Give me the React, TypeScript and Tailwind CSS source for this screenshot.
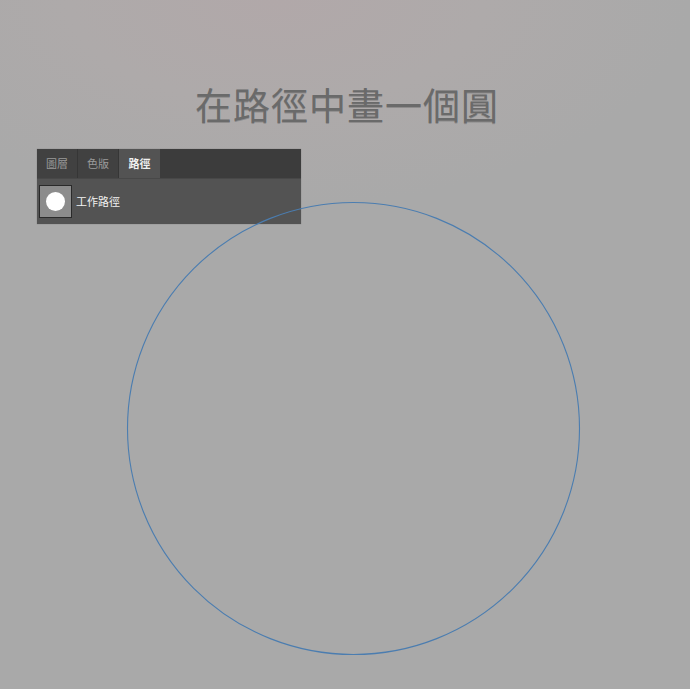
import React from "react";

export default function App() {
  return (
    <div
      className="relative w-[690px] h-[689px] overflow-hidden bg-[#a9a9a9]"
      style={{ fontFamily: '"Noto Sans CJK TC", "Noto Sans", sans-serif' }}
    >
      <div className="absolute inset-0 bg-[radial-gradient(ellipse_60%_30%_at_40%_0%,#b1a8a9_0%,#aeaaaa_50%,rgba(169,169,169,0)_100%)]" />
      <div className="relative flex flex-col">
        <div className="flex justify-center pt-[83px] pl-[4px]">
          <h1
            className="text-[37px] leading-[42px] font-normal tracking-[1px] text-[#6a6a6a]"
            style={{ textShadow: "0 1px 0 rgba(85,85,85,0.35)" }}
          >
            在路徑中畫一個圓
          </h1>
        </div>
        <div className="ml-[37px] mt-[24px] w-[264px] bg-[#3c3c3c] shadow-[0_0_1px_rgba(0,0,0,0.3)]">
          <div className="flex h-[29px] text-[11px] leading-none">
            <div className="w-[41px] flex items-center justify-center text-[#9a9a9a] bg-[#414141] border-r border-[#363636]">
              圖層
            </div>
            <div className="w-[41px] flex items-center justify-center text-[#9a9a9a] bg-[#414141] border-r border-[#363636]">
              色版
            </div>
            <div className="w-[41px] flex items-center justify-center text-[#f0f0f0] font-bold bg-[#535353]">
              路徑
            </div>
          </div>
          <div className="flex items-center h-[46px] bg-[#535353] border-t border-[#484848]">
            <div className="ml-[2px] w-[33px] h-[33px] bg-[#8c8c8c] border border-[#2a2a2a] flex items-center justify-center">
              <div className="w-[19px] h-[19px] rounded-full bg-white" />
            </div>
            <span className="ml-[4px] text-[11px] text-[#f2f2f2]">工作路徑</span>
          </div>
        </div>
      </div>
      <svg
        className="absolute left-0 top-0 pointer-events-none"
        width="690"
        height="689"
        viewBox="0 0 690 689"
      >
        <circle cx="353.5" cy="428.5" r="226" fill="none" stroke="#4b7db0" strokeWidth="1.1" />
      </svg>
    </div>
  );
}
